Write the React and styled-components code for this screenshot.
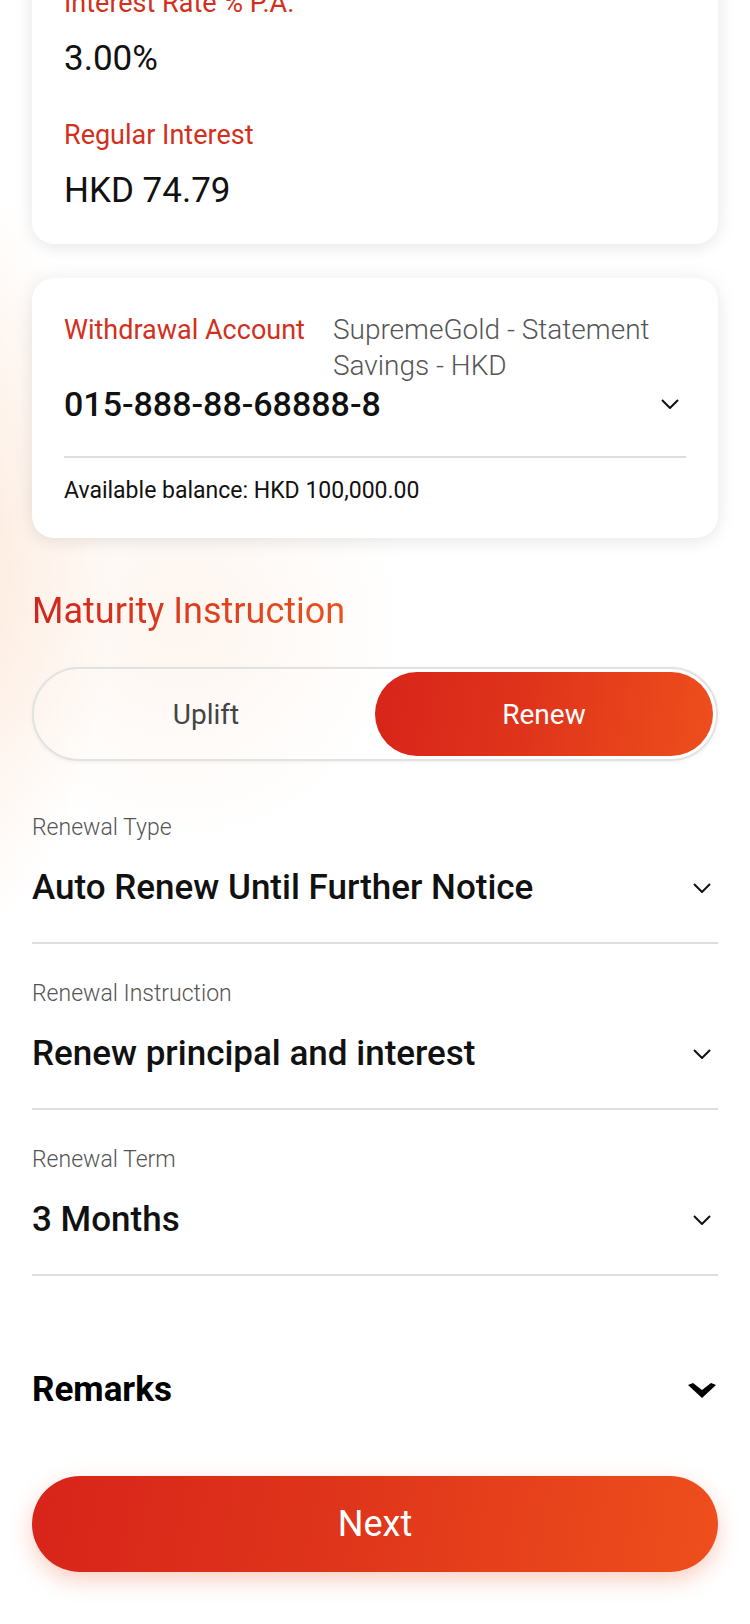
import React, { useState } from "react";
import styled, { createGlobalStyle } from "styled-components";

const GlobalStyle = createGlobalStyle`
  html, body {
    margin: 0;
    padding: 0;
    background: #fff;
  }
  body {
    font-family: Roboto, "Noto Sans", "Liberation Sans", sans-serif;
    color: #111;
    -webkit-font-smoothing: antialiased;
  }
  * {
    box-sizing: border-box;
  }
`;

const Screen = styled.div`
  width: 750px;
  height: 1624px;
  overflow: hidden;
  background:
    radial-gradient(ellipse 230px 520px at -60px 560px, rgba(252, 222, 200, 0.75), rgba(255, 255, 255, 0) 75%),
    radial-gradient(ellipse 300px 300px at 180px 620px, rgba(253, 236, 224, 0.5), rgba(255, 255, 255, 0) 75%),
    #fff;
`;

// the page is scrolled, the first card starts above the viewport
const Content = styled.div`
  margin-top: -45px;
  padding: 0 32px;
  display: flex;
  flex-direction: column;
`;

const Card = styled.section`
  background: #fff;
  border-radius: 22px;
  padding: ${({ $pt }) => $pt || "32px"} 32px 33px;
  margin-top: ${({ $mt }) => $mt || "0"};
  box-shadow: 0 0 22px rgba(0, 0, 0, 0.07), 0 6px 14px rgba(0, 0, 0, 0.04);
`;

const InfoBlock = styled.div`
  & + & {
    margin-top: 40px;
  }
`;

const InfoLabel = styled.div`
  font-size: 27px;
  line-height: 32px;
  color: #d32f1d;
`;

const InfoValue = styled.div`
  margin-top: 20px;
  font-size: 35px;
  line-height: 40px;
  font-weight: 400;
  color: #111;
`;

const AccountHead = styled.div`
  display: flex;
  gap: 28px;
  font-size: 27px;
  line-height: 36px;
`;

const AccountLabel = styled.div`
  flex-shrink: 0;
  color: #d32f1d;
`;

const AccountName = styled.div`
  font-size: 28px;
  color: #555;
  font-weight: 300;
`;

const SelectRow = styled.div`
  display: flex;
  align-items: center;
  justify-content: space-between;
  margin-top: ${({ $mt }) => $mt || "0"};
`;

const AccountNumber = styled.div`
  font-size: 34px;
  line-height: 40px;
  font-weight: 500;
  color: #111;
`;

const Divider = styled.hr`
  margin: ${({ $mt }) => $mt || "32px"} 0 0;
  border: none;
  height: 2px;
  background: #dedede;
`;

const Balance = styled.div`
  margin-top: 19px;
  font-size: 23px;
  line-height: 28px;
  color: #111;
`;

const SectionTitle = styled.h2`
  margin: 53px 0 0;
  font-size: 36px;
  line-height: 40px;
  font-weight: 400;
  align-self: flex-start;
  background: linear-gradient(90deg, #d1251b 0%, #e9521f 100%);
  -webkit-background-clip: text;
  background-clip: text;
  color: transparent;
`;

const Toggle = styled.div`
  margin-top: 36px;
  height: 94px;
  border: 2px solid #e2e2e2;
  border-radius: 47px;
  padding: 3px;
  display: grid;
  grid-template-columns: 1fr 1fr;
  box-shadow: 0 1px 4px rgba(0, 0, 0, 0.06);
`;

const ToggleOption = styled.button`
  border: none;
  border-radius: 42px;
  font-family: inherit;
  font-size: 28px;
  cursor: pointer;
  color: ${({ $active }) => ($active ? "#fff" : "#444")};
  background: ${({ $active }) =>
    $active
      ? "linear-gradient(100deg, #d8241a 0%, #df341b 45%, #ee4f1c 100%)"
      : "transparent"};
`;

const Field = styled.div`
  margin-top: ${({ $first }) => ($first ? "53px" : "36px")};
`;

const FieldLabel = styled.div`
  font-size: 23px;
  line-height: 28px;
  font-weight: 300;
  color: #555;
`;

const FieldValue = styled.div`
  font-size: 35px;
  line-height: 40px;
  font-weight: 500;
  color: #111;
`;

const Remarks = styled.div`
  margin-top: 94px;
  display: flex;
  align-items: center;
  justify-content: space-between;
`;

const RemarksTitle = styled.div`
  font-size: 35px;
  line-height: 40px;
  font-weight: 700;
  color: #000;
`;

const NextButton = styled.button`
  margin-top: 66px;
  height: 96px;
  width: 100%;
  border: none;
  border-radius: 48px;
  font-family: inherit;
  font-size: 36px;
  font-weight: 400;
  color: #fff;
  background: linear-gradient(100deg, #d8241a 0%, #df351b 45%, #ee4f1c 100%);
  box-shadow: 0 8px 22px rgba(232, 78, 36, 0.28);
  cursor: pointer;
`;

const ChevronSvg = styled.svg`
  flex-shrink: 0;
  margin-right: ${({ $mr }) => $mr || "7px"};
`;

function Chevron({ mr }) {
  return (
    <ChevronSvg $mr={mr} width="18" height="10" viewBox="0 0 18 10">
      <path d="M1 1 L9 9 L17 1" fill="none" stroke="#111" strokeWidth="2" />
    </ChevronSvg>
  );
}

function BoldChevron() {
  return (
    <ChevronSvg $mr="2px" width="28" height="15" viewBox="0 0 28 15">
      <polygon points="0,2 5,0 14,7 23,0 28,2 14,15" fill="#000" />
    </ChevronSvg>
  );
}

const fields = [
  { label: "Renewal Type", value: "Auto Renew Until Further Notice" },
  { label: "Renewal Instruction", value: "Renew principal and interest" },
  { label: "Renewal Term", value: "3 Months" },
];

export default function App() {
  const [mode, setMode] = useState("renew");

  return (
    <Screen>
      <GlobalStyle />
      <Content>
        <Card>
          <InfoBlock>
            <InfoLabel>Interest Rate % P.A.</InfoLabel>
            <InfoValue>3.00%</InfoValue>
          </InfoBlock>
          <InfoBlock>
            <InfoLabel>Regular Interest</InfoLabel>
            <InfoValue>HKD 74.79</InfoValue>
          </InfoBlock>
        </Card>

        <Card $mt="34px" $pt="34px">
          <AccountHead>
            <AccountLabel>Withdrawal Account</AccountLabel>
            <AccountName>SupremeGold - Statement Savings - HKD</AccountName>
          </AccountHead>
          <SelectRow>
            <AccountNumber>015-888-88-68888-8</AccountNumber>
            <Chevron mr="7px" />
          </SelectRow>
          <Divider />
          <Balance>Available balance: HKD 100,000.00</Balance>
        </Card>

        <SectionTitle>Maturity Instruction</SectionTitle>
        <Toggle>
          <ToggleOption $active={mode === "uplift"} onClick={() => setMode("uplift")}>
            Uplift
          </ToggleOption>
          <ToggleOption $active={mode === "renew"} onClick={() => setMode("renew")}>
            Renew
          </ToggleOption>
        </Toggle>

        {fields.map((f, i) => (
          <Field key={f.label} $first={i === 0}>
            <FieldLabel>{f.label}</FieldLabel>
            <SelectRow $mt="26px">
              <FieldValue>{f.value}</FieldValue>
              <Chevron />
            </SelectRow>
            <Divider $mt="34px" />
          </Field>
        ))}

        <Remarks>
          <RemarksTitle>Remarks</RemarksTitle>
          <BoldChevron />
        </Remarks>

        <NextButton>Next</NextButton>
      </Content>
    </Screen>
  );
}
